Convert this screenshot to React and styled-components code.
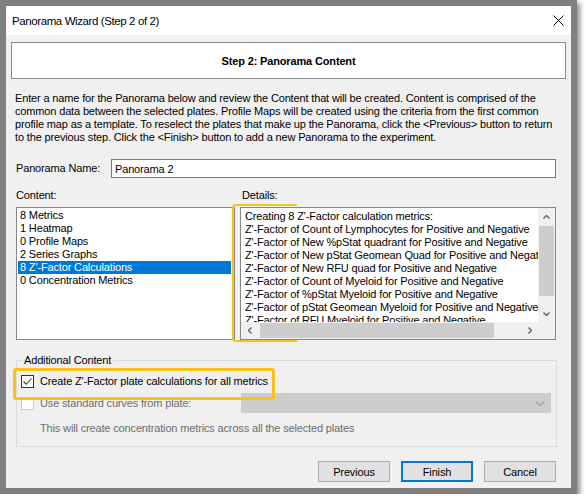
import React from "react";
import styled, { createGlobalStyle } from "styled-components";

const Global = createGlobalStyle`
  html, body { margin: 0; padding: 0; background: #ffffff; }
  body {
    font-family: "Liberation Sans", Arial, sans-serif;
    font-size: 11px;
    letter-spacing: -0.15px;
    color: #000;
  }
  * { box-sizing: border-box; }
`;

const Frame = styled.div`
  width: 577px;
  height: 494px;
  padding: 6px;
  background: #808080;
  box-shadow: 3px 3px 5px rgba(0, 0, 0, 0.45);
`;

const Window = styled.div`
  width: 565px;
  height: 482px;
  background: #f0f0f0;
  display: flex;
  flex-direction: column;
`;

const TitleBar = styled.div`
  height: 29px;
  background: #ffffff;
  display: flex;
  align-items: center;
  justify-content: space-between;
  padding: 0 7px 0 6px;
  font-size: 11.5px;
  letter-spacing: -0.4px;
  color: #000;
`;

const Body = styled.div`
  flex: 1;
  display: flex;
  flex-direction: column;
  padding: 7px 5px 0 5px;
`;

const Header = styled.div`
  height: 37px;
  border: 1px solid #8c8c8c;
  background: #ffffff;
  display: flex;
  align-items: center;
  justify-content: center;
  font-weight: bold;
  font-size: 11px;
`;

const Content = styled.div`
  display: flex;
  flex-direction: column;
  padding: 0 10px 0 5px;
`;

const Intro = styled.p`
  margin: 13px 0 0 -1px;
  line-height: 13px;
  white-space: nowrap;
`;

const NameRow = styled.div`
  display: flex;
  align-items: center;
  margin-top: 15px;
  height: 19px;
`;

const Label = styled.span`
  line-height: 13px;
  padding-left: ${(p) => p.$indent || 0}px;
`;

const TextInput = styled.div`
  margin-left: auto;
  width: 445px;
  height: 19px;
  border: 1px solid #7a7a7a;
  background: #fff;
  padding-left: 3px;
  display: flex;
  align-items: center;
`;

const ListsGrid = styled.div`
  position: relative;
  margin-top: 11px;
  display: grid;
  grid-template-columns: 219px 316px;
  grid-template-rows: 13px 133px;
  column-gap: 5px;
  row-gap: 5px;
`;

const ListBox = styled.div`
  border: 1px solid #828790;
  background: #fff;
  padding: 1px 3px 0 1px;
`;

const ListItem = styled.div`
  height: 13px;
  line-height: 13px;
  padding-left: 2px;
  white-space: nowrap;
  background: ${(p) => (p.$selected ? "#0078d7" : "transparent")};
  color: ${(p) => (p.$selected ? "#fff" : "#000")};
`;

const DetailsBox = styled.div`
  border: 1px solid #828790;
  background: #fff;
  display: grid;
  grid-template-columns: 297px 17px;
  grid-template-rows: 114px 17px;
`;

const DetailsText = styled.div`
  overflow: hidden;
  padding: 2px 0 0 4px;
  line-height: 13px;
  white-space: nowrap;
`;

const VScroll = styled.div`
  background: #f0f0f0;
  display: flex;
  flex-direction: column;
`;

const HScroll = styled.div`
  background: #f0f0f0;
  display: flex;
`;

const ArrowCell = styled.div`
  width: 17px;
  height: 17px;
  flex: none;
  display: flex;
  align-items: center;
  justify-content: center;
`;

const VTrack = styled.div`
  flex: 1;
  padding: 1px 1px 0 1px;
`;

const VThumb = styled.div`
  height: ${(p) => p.$size}px;
  background: #cdcdcd;
`;

const HTrack = styled.div`
  flex: 1;
  padding: 1px 0 1px 2px;
`;

const HThumb = styled.div`
  width: ${(p) => p.$size}px;
  height: 100%;
  background: #cdcdcd;
`;

const Corner = styled.div`
  background: #f0f0f0;
`;

const BracketMark = styled.svg`
  position: absolute;
  left: 215px;
  top: 14px;
  pointer-events: none;
`;

const Group = styled.fieldset`
  margin: 14px 0 0 0;
  padding: 0 0 11px 0;
  width: 541px;
  border: 1px solid #dcdcdc;
  min-width: 0;
`;

const Legend = styled.legend`
  margin-left: 5px;
  padding: 0 2px;
  line-height: 13px;
  font-size: 11px;
`;

const HighlightWrap = styled.div`
  position: relative;
  margin-top: 7px;
  &::after {
    content: "";
    position: absolute;
    left: -4px;
    top: -6px;
    width: 256px;
    height: 26px;
    border: 3px solid #f8c21c;
    border-radius: 3px;
    pointer-events: none;
  }
`;

const CheckRow = styled.div`
  display: flex;
  align-items: center;
  height: ${(p) => p.$height || 14}px;
  margin-top: ${(p) => p.$top || 0}px;
  padding-left: 4px;
  color: ${(p) => (p.$disabled ? "#6d6d6d" : "#000")};
`;

const Box = styled.span`
  width: 13px;
  height: 13px;
  flex: none;
  border: 1px solid ${(p) => (p.$disabled ? "#cccccc" : "#333333")};
  background: #fff;
  display: flex;
  align-items: center;
  justify-content: center;
`;

const CheckLabel = styled.span`
  margin-left: 6px;
  line-height: 13px;
  white-space: nowrap;
`;

const Combo = styled.div`
  margin-left: auto;
  margin-right: 5px;
  width: 310px;
  height: 20px;
  background: #cccccc;
  border: 1px solid #cccccc;
  display: flex;
  align-items: center;
  justify-content: flex-end;
  padding-right: 5px;
`;

const Note = styled.div`
  margin-top: 9px;
  padding-left: 23px;
  line-height: 13px;
  color: #6d6d6d;
`;

const ButtonRow = styled.div`
  margin-top: 14px;
  display: flex;
  justify-content: flex-end;
  gap: 11px;
`;

const Button = styled.div`
  width: 72px;
  height: 21px;
  background: #e1e1e1;
  border: ${(p) => (p.$default ? "2px solid #0078d7" : "1px solid #adadad")};
  display: flex;
  align-items: center;
  justify-content: center;
`;

const Chevron = ({ dir, color = "#606060", w = 7, h = 4 }) => {
  const paths = {
    up: `M0.5 ${h - 0.5} L${w / 2} 0.5 L${w - 0.5} ${h - 0.5}`,
    down: `M0.5 0.5 L${w / 2} ${h - 0.5} L${w - 0.5} 0.5`,
    left: `M${h - 0.5} 0.5 L0.5 ${w / 2} L${h - 0.5} ${w - 0.5}`,
    right: `M0.5 0.5 L${h - 0.5} ${w / 2} L0.5 ${w - 0.5}`,
  };
  const vertical = dir === "up" || dir === "down";
  return (
    <svg width={vertical ? w : h} height={vertical ? h : w} viewBox={`0 0 ${vertical ? w : h} ${vertical ? h : w}`}>
      <path d={paths[dir]} fill="none" stroke={color} strokeWidth="1.4" />
    </svg>
  );
};

const contentItems = [
  "8 Metrics",
  "1 Heatmap",
  "0 Profile Maps",
  "2 Series Graphs",
  "8 Z'-Factor Calculations",
  "0 Concentration Metrics",
];

const detailLines = [
  "Creating 8 Z'-Factor calculation metrics:",
  "Z'-Factor of Count of Lymphocytes for Positive and Negative",
  "Z'-Factor of New %pStat quadrant for Positive and Negative",
  "Z'-Factor of New pStat Geomean Quad for Positive and Negative",
  "Z'-Factor of New RFU quad for Positive and Negative",
  "Z'-Factor of Count of Myeloid for Positive and Negative",
  "Z'-Factor of %pStat Myeloid for Positive and Negative",
  "Z'-Factor of pStat Geomean Myeloid for Positive and Negative",
  "Z'-Factor of RFU Myeloid for Positive and Negative",
];

export default function App() {
  return (
    <>
      <Global />
      <Frame>
        <Window>
          <TitleBar>
            <span>Panorama Wizard (Step 2 of 2)</span>
            <svg width="11" height="11" viewBox="0 0 11 11">
              <path d="M0.5 0.5 L10.5 10.5 M10.5 0.5 L0.5 10.5" stroke="#000" strokeWidth="1" fill="none" />
            </svg>
          </TitleBar>
          <Body>
            <Header>Step 2: Panorama Content</Header>
            <Content>
              <Intro>
                Enter a name for the Panorama below and review the Content that will be created. Content is comprised of the
                <br />
                common data between the selected plates. Profile Maps will be created using the criteria from the first common
                <br />
                profile map as a template. To reselect the plates that make up the Panorama, click the &lt;Previous&gt; button to return
                <br />
                to the previous step. Click the &lt;Finish&gt; button to add a new Panorama to the experiment.
              </Intro>
              <NameRow>
                <Label>Panorama Name:</Label>
                <TextInput>Panorama 2</TextInput>
              </NameRow>
              <ListsGrid>
                <Label>Content:</Label>
                <Label $indent={2}>Details:</Label>
                <ListBox>
                  {contentItems.map((t, i) => (
                    <ListItem key={t} $selected={i === 4}>
                      {t}
                    </ListItem>
                  ))}
                </ListBox>
                <DetailsBox>
                  <DetailsText>
                    {detailLines.map((t) => (
                      <div key={t}>{t}</div>
                    ))}
                  </DetailsText>
                  <VScroll>
                    <ArrowCell>
                      <Chevron dir="up" />
                    </ArrowCell>
                    <VTrack>
                      <VThumb $size={70} />
                    </VTrack>
                    <ArrowCell>
                      <Chevron dir="down" />
                    </ArrowCell>
                  </VScroll>
                  <HScroll>
                    <ArrowCell>
                      <Chevron dir="left" />
                    </ArrowCell>
                    <HTrack>
                      <HThumb $size={234} />
                    </HTrack>
                    <ArrowCell>
                      <Chevron dir="right" />
                    </ArrowCell>
                  </HScroll>
                  <Corner />
                </DetailsBox>
                <BracketMark width="66" height="140" viewBox="0 0 66 140">
                  <path
                    d="M65 2 H5 Q2 2 2 5 V135 Q2 138 5 138 H72"
                    fill="none"
                    stroke="#f8c21c"
                    strokeWidth="2.2"
                    strokeLinecap="round"
                  />
                </BracketMark>
              </ListsGrid>
              <Group>
                <Legend>Additional Content</Legend>
                <HighlightWrap>
                  <CheckRow>
                    <Box>
                      <svg width="11" height="11" viewBox="0 0 11 11">
                        <path d="M1.5 5.5 L4.3 8.3 L9.5 2.5" fill="none" stroke="#333" strokeWidth="1.1" />
                      </svg>
                    </Box>
                    <CheckLabel>Create Z'-Factor plate calculations for all metrics</CheckLabel>
                  </CheckRow>
                </HighlightWrap>
                <CheckRow $disabled $height={20} $top={5}>
                  <Box $disabled />
                  <CheckLabel>Use standard curves from plate:</CheckLabel>
                  <Combo>
                    <Chevron dir="down" color="#a6a6a6" w={10} h={5} />
                  </Combo>
                </CheckRow>
                <Note>This will create concentration metrics across all the selected plates</Note>
              </Group>
              <ButtonRow>
                <Button>Previous</Button>
                <Button $default>Finish</Button>
                <Button>Cancel</Button>
              </ButtonRow>
            </Content>
          </Body>
        </Window>
      </Frame>
    </>
  );
}
